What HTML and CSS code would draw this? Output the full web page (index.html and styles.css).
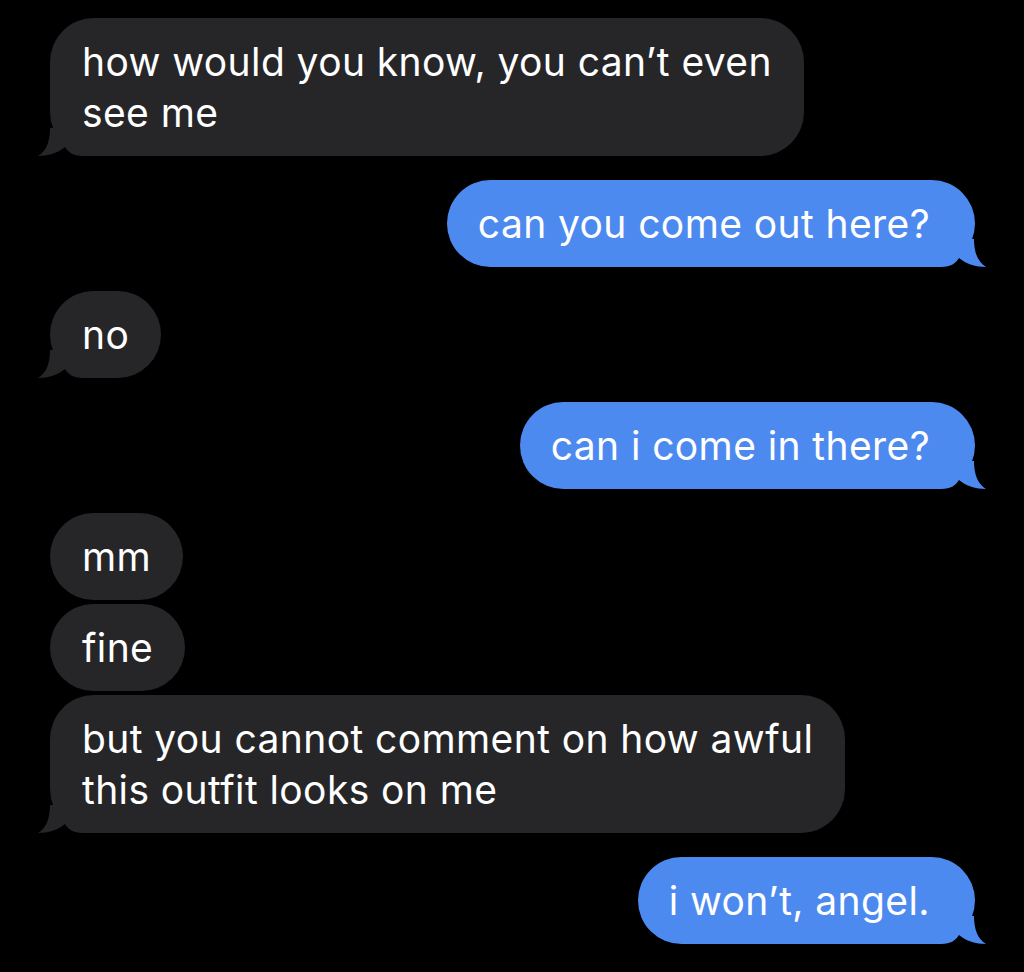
FILE: index.html
```html
<!DOCTYPE html>
<html>
<head>
<meta charset="utf-8">
<link rel="stylesheet" href="styles.css">
</head>
<body>
<div class="chat">
  <div class="msg in tail first">how would you know, you can’t even <br>see me
    <svg class="tail-svg" viewBox="0 0 56 28" width="56" height="28"><path d="M12 0 C12 14 8 23 0 28 C10 28 20 25 27 19 C30 24 35 28 45 28 L56 28 L56 0 Z"/></svg>
  </div>
  <div class="msg out tail new">can you come out here?
    <svg class="tail-svg" viewBox="0 0 56 28" width="56" height="28"><path d="M44 0 C44 14 48 23 56 28 C46 28 36 25 29 19 C26 24 21 28 11 28 L0 28 L0 0 Z"/></svg>
  </div>
  <div class="msg in tail new">no
    <svg class="tail-svg" viewBox="0 0 56 28" width="56" height="28"><path d="M12 0 C12 14 8 23 0 28 C10 28 20 25 27 19 C30 24 35 28 45 28 L56 28 L56 0 Z"/></svg>
  </div>
  <div class="msg out tail new">can i come in there?
    <svg class="tail-svg" viewBox="0 0 56 28" width="56" height="28"><path d="M44 0 C44 14 48 23 56 28 C46 28 36 25 29 19 C26 24 21 28 11 28 L0 28 L0 0 Z"/></svg>
  </div>
  <div class="msg in new">mm</div>
  <div class="msg in grouped">fine</div>
  <div class="msg in tail grouped">but you cannot comment on how awful <br>this outfit looks on me
    <svg class="tail-svg" viewBox="0 0 56 28" width="56" height="28"><path d="M12 0 C12 14 8 23 0 28 C10 28 20 25 27 19 C30 24 35 28 45 28 L56 28 L56 0 Z"/></svg>
  </div>
  <div class="msg out tail new">i won’t, angel.
    <svg class="tail-svg" viewBox="0 0 56 28" width="56" height="28"><path d="M44 0 C44 14 48 23 56 28 C46 28 36 25 29 19 C26 24 21 28 11 28 L0 28 L0 0 Z"/></svg>
  </div>
</div>
</body>
</html>
```

FILE: styles.css
```css
html, body {
  margin: 0;
  padding: 0;
  background: #000;
}
body {
  width: 1024px;
  height: 972px;
  overflow: hidden;
}
.chat {
  display: flex;
  flex-direction: column;
  padding: 18px 49px 0 49px;
}
.msg {
  position: relative;
  font-family: Inter, "Noto Sans", sans-serif;
  font-size: 39px;
  letter-spacing: 0.4px;
  line-height: 51px;
  color: #fff;
  padding: 18px 32px;
  border-radius: 44px;
  white-space: nowrap;
}
.msg.in {
  align-self: flex-start;
  background: #262629;
  margin-left: 1px;
}
.msg.out {
  align-self: flex-end;
  background: #4d8af0;
  padding: 18px 45px 18px 31px;
}
.msg.new { margin-top: 24px; }
.msg.grouped { margin-top: 4px; }
.msg.first { margin-top: 0; }
.tail-svg {
  position: absolute;
  bottom: 0;
  display: block;
}
.msg.in .tail-svg {
  left: -12px;
  fill: #262629;
}
.msg.out .tail-svg {
  right: -11px;
  fill: #4d8af0;
}
```
